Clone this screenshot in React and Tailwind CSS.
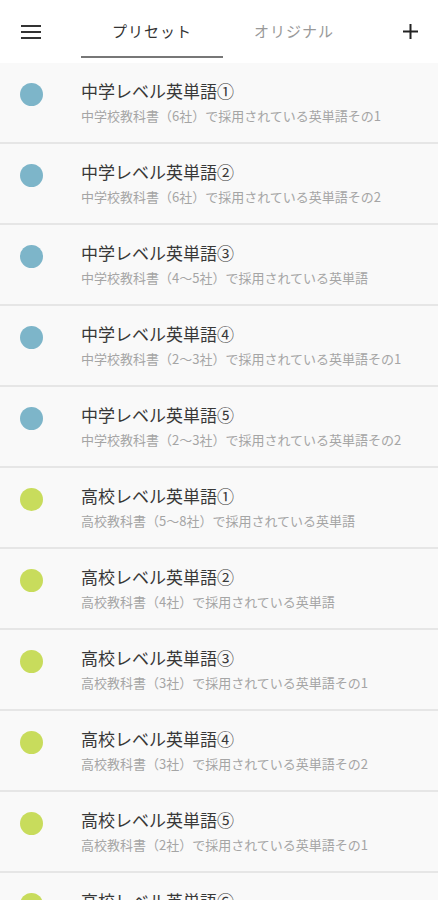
import React from "react";

const items = [
  { title: "中学レベル英単語①", sub: "中学校教科書（6社）で採用されている英単語その1", color: "bg-[#7db5c9]" },
  { title: "中学レベル英単語②", sub: "中学校教科書（6社）で採用されている英単語その2", color: "bg-[#7db5c9]" },
  { title: "中学レベル英単語③", sub: "中学校教科書（4～5社）で採用されている英単語", color: "bg-[#7db5c9]" },
  { title: "中学レベル英単語④", sub: "中学校教科書（2～3社）で採用されている英単語その1", color: "bg-[#7db5c9]" },
  { title: "中学レベル英単語⑤", sub: "中学校教科書（2～3社）で採用されている英単語その2", color: "bg-[#7db5c9]" },
  { title: "高校レベル英単語①", sub: "高校教科書（5～8社）で採用されている英単語", color: "bg-[#c8dc5c]" },
  { title: "高校レベル英単語②", sub: "高校教科書（4社）で採用されている英単語", color: "bg-[#c8dc5c]" },
  { title: "高校レベル英単語③", sub: "高校教科書（3社）で採用されている英単語その1", color: "bg-[#c8dc5c]" },
  { title: "高校レベル英単語④", sub: "高校教科書（3社）で採用されている英単語その2", color: "bg-[#c8dc5c]" },
  { title: "高校レベル英単語⑤", sub: "高校教科書（2社）で採用されている英単語その1", color: "bg-[#c8dc5c]" },
  { title: "高校レベル英単語⑥", sub: "高校教科書（2社）で採用されている英単語その2", color: "bg-[#c8dc5c]" },
];

const App = () => {
  return (
    <div
      className="w-[438px] h-[900px] overflow-hidden bg-[#f8f8f8]"
      style={{ fontFamily: '"Noto Sans CJK JP", "Noto Sans", sans-serif' }}
    >
      <header className="h-[63px] bg-white flex items-stretch">
        <div className="w-[81px] flex items-center pl-[21px]">
          <div className="flex flex-col gap-[4px] w-[20px]">
            <span className="block h-[2px] bg-[#333]" />
            <span className="block h-[2px] bg-[#333]" />
            <span className="block h-[2px] bg-[#333]" />
          </div>
        </div>
        <div className="w-[142px] flex flex-col">
          <div className="flex-1 flex items-center justify-center text-[15px] text-[#333] tracking-[1px] pt-[6px]">
            プリセット
          </div>
          <div className="h-[2px] bg-[#777] mb-[5px]" />
        </div>
        <div className="w-[142px] flex items-center justify-center text-[15px] text-[#999] tracking-[1px]">
          オリジナル
        </div>
        <div className="flex-1 flex items-center justify-end pr-[19px]">
          <svg width="17" height="17" viewBox="0 0 17 17">
            <path d="M8.5 1v15M1 8.5h15" stroke="#222" strokeWidth="2" />
          </svg>
        </div>
      </header>
      <ul>
        {items.map((item) => (
          <li
            key={item.title}
            className="h-[81px] flex border-b-[2px] border-[#e6e6e6] bg-[#f9f9f9]"
          >
            <div className="w-[81px] flex pl-[20px] pt-[20px]">
              <span className={`block w-[23px] h-[23px] rounded-full ${item.color}`} />
            </div>
            <div className="flex flex-col pt-[16px]">
              <p className="text-[17px] leading-[24px] text-[#383838]">{item.title}</p>
              <p className="text-[13px] leading-[18px] text-[#a5a5a5] mt-[4px]">{item.sub}</p>
            </div>
          </li>
        ))}
      </ul>
    </div>
  );
};

export default App;
